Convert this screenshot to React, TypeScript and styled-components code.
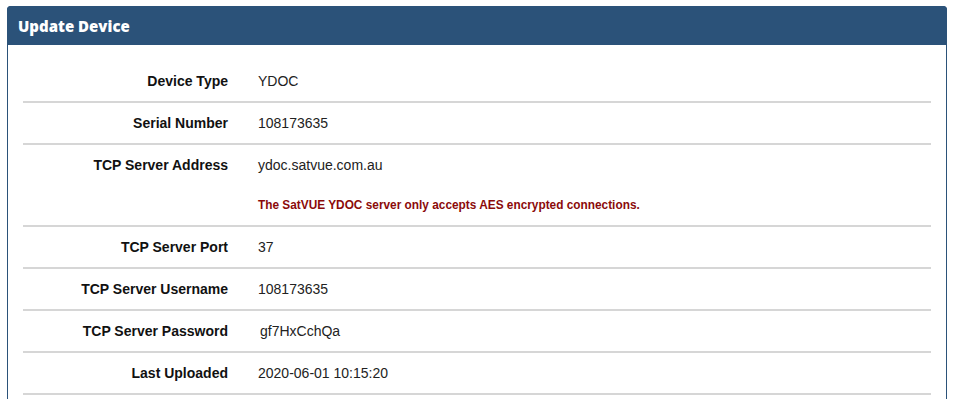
import React from "react";
import styled, { createGlobalStyle } from "styled-components";

const Global = createGlobalStyle`
  html, body { margin: 0; padding: 0; background: #ffffff; }
  body { font-family: "Liberation Sans", Arial, sans-serif; color: #222; }
`;

const Page = styled.div`
  padding: 6px 11px 0 7px;
`;

const Panel = styled.section`
  width: 940px;
  box-sizing: border-box;
  border: 1px solid #2b5279;
  border-bottom: none;
  border-radius: 4px 4px 0 0;
  background: #fff;
`;

const Header = styled.header`
  height: 39px;
  margin: -1px -1px 0;
  background: #2b5279;
  border-radius: 4px 4px 0 0;
  display: flex;
  align-items: center;
  padding: 0 11px;
`;

const Title = styled.h2`
  margin: 0;
  color: #fff;
  font-family: "Open Sans", "Noto Sans", sans-serif;
  font-weight: 800;
  font-size: 15px;
  letter-spacing: 0;
`;

const Body = styled.div`
  padding: 16px 15px 4px 15px;
`;

const Row = styled.div`
  display: grid;
  grid-template-columns: 205px 1fr;
  column-gap: 30px;
  border-bottom: 2px solid #d6d6d6;
`;

const Label = styled.div`
  text-align: right;
  font-weight: 700;
  font-size: 14px;
  line-height: 40px;
  color: #111;
`;

const Value = styled.div<{ $indent?: number }>`
  font-size: 14px;
  line-height: 40px;
  color: #222;
  padding-left: ${(p) => p.$indent ?? 0}px;
`;

const Warning = styled.div`
  margin: 10px 0 10px;
  line-height: 20px;
  font-size: 11.85px;
  font-weight: 700;
  color: #8b0a0a;
`;

const rows: { label: string; value: string; indent?: number; warning?: string }[] = [
  { label: "Device Type", value: "YDOC" },
  { label: "Serial Number", value: "108173635" },
  {
    label: "TCP Server Address",
    value: "ydoc.satvue.com.au",
    warning: "The SatVUE YDOC server only accepts AES encrypted connections.",
  },
  { label: "TCP Server Port", value: "37" },
  { label: "TCP Server Username", value: "108173635" },
  { label: "TCP Server Password", value: "gf7HxCchQa", indent: 2 },
  { label: "Last Uploaded", value: "2020-06-01 10:15:20" },
];

export default function App() {
  return (
    <>
      <Global />
      <Page>
        <Panel>
          <Header>
            <Title>Update Device</Title>
          </Header>
          <Body>
            {rows.map((r) => (
              <Row key={r.label}>
                <Label>{r.label}</Label>
                <div>
                  <Value $indent={r.indent}>{r.value}</Value>
                  {r.warning && <Warning>{r.warning}</Warning>}
                </div>
              </Row>
            ))}
          </Body>
        </Panel>
      </Page>
    </>
  );
}
